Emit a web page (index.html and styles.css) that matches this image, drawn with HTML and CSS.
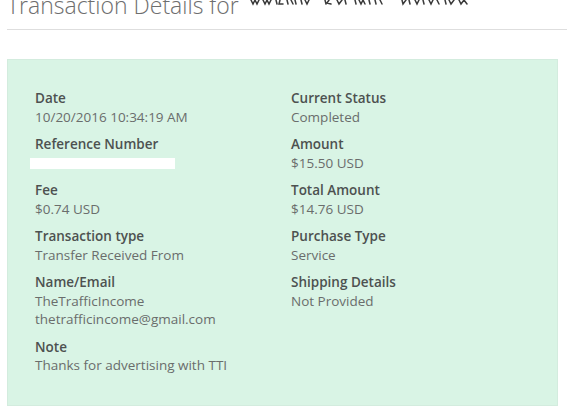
FILE: index.html
```html
<!DOCTYPE html>
<html lang="en">
<head>
<meta charset="utf-8">
<title>Transaction Details</title>
<link rel="stylesheet" href="styles.css">
</head>
<body>
<div class="page">
  <header class="header">
    <h1 class="title">Transaction Details for</h1>
    <svg class="scribble" width="222" height="7" viewBox="0 0 222 7" aria-hidden="true">
      <g stroke="#3a3a3a" stroke-width="1.5" fill="none" stroke-linecap="round">
        <path d="M2 0 L4 4 L6 0 L8 4 L10 0"/>
        <path d="M14 0 L16 4 L18 0 L20 4 L22 0"/>
        <path d="M27 0 L28 4 M31 0 L30 4 L34 4"/>
        <path d="M38 0 L39 4 M42 0 L44 4 M46 0 L47 4"/>
        <path d="M52 0 L53 4 M56 0 L58 4 L60 0"/>
        <path d="M76 0 L77 4 M80 0 L78 3 L82 4"/>
        <path d="M88 0 L90 4 L93 0 M96 0 L97 4"/>
        <path d="M106 0 L107 4 M110 0 L112 4 L114 0 L116 4 M120 0 L121 4"/>
        <path d="M126 0 L127 4 M131 0 L133 4"/>
        <path d="M153 0 L154 4 L157 0 M160 0 L161 4"/>
        <path d="M166 0 L168 4 L170 0 M174 0 L175 4"/>
        <path d="M180 0 L182 4 L184 0 M188 0 L190 4"/>
        <path d="M196 0 L197 4 M200 0 L202 4 L205 0 M210 0 L212 4 L215 0 L218 4"/>
      </g>
    </svg>
  </header>

  <section class="card">
    <div class="grid">
      <div class="col">
        <div class="field">
          <div class="label">Date</div>
          <div class="value">10/20/2016 10:34:19 AM</div>
        </div>
        <div class="field">
          <div class="label">Reference Number</div>
          <div class="value"><span class="redact"></span></div>
        </div>
        <div class="field">
          <div class="label">Fee</div>
          <div class="value">$0.74 USD</div>
        </div>
        <div class="field">
          <div class="label">Transaction type</div>
          <div class="value">Transfer Received From</div>
        </div>
        <div class="field">
          <div class="label">Name/Email</div>
          <div class="value">TheTrafficIncome</div>
          <div class="value">thetrafficincome@gmail.com</div>
        </div>
        <div class="field">
          <div class="label">Note</div>
          <div class="value">Thanks for advertising with TTI</div>
        </div>
      </div>
      <div class="col">
        <div class="field">
          <div class="label">Current Status</div>
          <div class="value">Completed</div>
        </div>
        <div class="field">
          <div class="label">Amount</div>
          <div class="value">$15.50 USD</div>
        </div>
        <div class="field">
          <div class="label">Total Amount</div>
          <div class="value">$14.76 USD</div>
        </div>
        <div class="field">
          <div class="label">Purchase Type</div>
          <div class="value">Service</div>
        </div>
        <div class="field">
          <div class="label">Shipping Details</div>
          <div class="value">Not Provided</div>
        </div>
      </div>
    </div>
  </section>
</div>
</body>
</html>
```

FILE: styles.css
```css
html, body {
  margin: 0;
  padding: 0;
  background: #ffffff;
  overflow: hidden;
}

.page {
  width: 567px;
  height: 410px;
  padding-left: 7px;
  box-sizing: border-box;
  font-family: "Open Sans", "Liberation Sans", sans-serif;
}

.header {
  display: flex;
  align-items: flex-start;
  height: 30px;
  border-bottom: 1px solid #dedede;
  box-sizing: border-box;
}

.title {
  margin: -7px 0 0 0;
  font-size: 23px;
  line-height: 24px;
  font-weight: 300;
  color: #6e6e6e;
  white-space: nowrap;
}

.scribble {
  margin-left: 10px;
  margin-top: 0;
  display: block;
}

.card {
  margin-top: 29px;
  width: 551px;
  height: 347px;
  box-sizing: border-box;
  background: #d9f4e5;
  border: 1px solid #d3ecde;
  padding: 29px 27px 0 27px;
}

.grid {
  display: grid;
  grid-template-columns: 1fr 1fr;
  column-gap: 17px;
}

.field {
  margin-bottom: 9px;
  font-size: 13.5px;
  line-height: 18.5px;
}

.label {
  font-weight: 600;
  color: #4d5150;
}

.value {
  color: #6a6d6c;
}

.redact {
  display: inline-block;
  width: 145px;
  height: 11px;
  margin-left: -5px;
  background: #ffffff;
  vertical-align: -1px;
}
```
